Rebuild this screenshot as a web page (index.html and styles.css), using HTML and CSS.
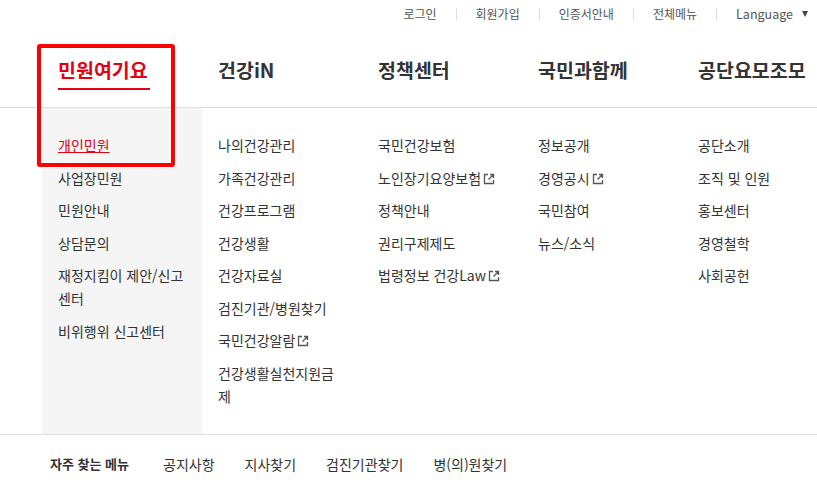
FILE: index.html
```html
<!DOCTYPE html>
<html lang="ko">
<head>
    <meta charset="UTF-8">
    <meta name="viewport" content="width=device-width, initial-scale=1.0">
    <title>국민건강보험공단 - 전체메뉴</title>
    <link rel="stylesheet" href="styles.css">
</head>

<body>
    <div class="util">
        <a href="#">로그인</a><span class="sep"></span>
        <a href="#">회원가입</a><span class="sep"></span>
        <a href="#">인증서안내</a><span class="sep"></span>
        <a href="#">전체메뉴</a><span class="sep"></span>
        <a href="#" class="lang">Language <span class="tri"></span></a>
    </div>

    <div class="gnb">
        <div class="g1 on"><span>민원여기요</span></div>
        <div class="g1"><span>건강iN</span></div>
        <div class="g1"><span>정책센터</span></div>
        <div class="g1"><span>국민과함께</span></div>
        <div class="g1"><span>공단요모조모</span></div>
    </div>

    <div class="sub">
        <ul class="col gray">
            <li><a href="#" class="cur">개인민원</a></li>
            <li><a href="#">사업장민원</a></li>
            <li><a href="#">민원안내</a></li>
            <li><a href="#">상담문의</a></li>
            <li><a href="#">재정지킴이 제안/신고센터</a></li>
            <li><a href="#">비위행위 신고센터</a></li>
        </ul>
        <ul class="col">
            <li><a href="#">나의건강관리</a></li>
            <li><a href="#">가족건강관리</a></li>
            <li><a href="#">건강프로그램</a></li>
            <li><a href="#">건강생활</a></li>
            <li><a href="#">건강자료실</a></li>
            <li><a href="#">검진기관/병원찾기</a></li>
            <li><a href="#">국민건강알람<svg class="ext" viewBox="0 0 12 12"><path d="M5 1.5H1.5v9h9V7M7 1.5h3.5V5M10.5 1.5 5.5 6.5"/></svg></a></li>
            <li><a href="#">건강생활실천지원금제</a></li>
        </ul>
        <ul class="col">
            <li><a href="#">국민건강보험</a></li>
            <li><a href="#">노인장기요양보험<svg class="ext" viewBox="0 0 12 12"><path d="M5 1.5H1.5v9h9V7M7 1.5h3.5V5M10.5 1.5 5.5 6.5"/></svg></a></li>
            <li><a href="#">정책안내</a></li>
            <li><a href="#">권리구제제도</a></li>
            <li><a href="#">법령정보 건강Law<svg class="ext" viewBox="0 0 12 12"><path d="M5 1.5H1.5v9h9V7M7 1.5h3.5V5M10.5 1.5 5.5 6.5"/></svg></a></li>
        </ul>
        <ul class="col">
            <li><a href="#">정보공개</a></li>
            <li><a href="#">경영공시<svg class="ext" viewBox="0 0 12 12"><path d="M5 1.5H1.5v9h9V7M7 1.5h3.5V5M10.5 1.5 5.5 6.5"/></svg></a></li>
            <li><a href="#">국민참여</a></li>
            <li><a href="#">뉴스/소식</a></li>
        </ul>
        <ul class="col">
            <li><a href="#">공단소개</a></li>
            <li><a href="#">조직 및 인원</a></li>
            <li><a href="#">홍보센터</a></li>
            <li><a href="#">경영철학</a></li>
            <li><a href="#">사회공헌</a></li>
        </ul>
    </div>

    <div class="quick">
        <strong>자주 찾는 메뉴</strong>
        <a href="#">공지사항</a>
        <a href="#">지사찾기</a>
        <a href="#">검진기관찾기</a>
        <a href="#">병(의)원찾기</a>
    </div>

    <!-- 강조 표시 -->
    <div class="mark"></div>
</body>
</html>
```

FILE: styles.css
```css
body {
    margin: 0;
    font-family: "Noto Sans CJK KR", "Noto Sans", sans-serif;
    color: #333;
    background: #fff;
    position: relative;
    overflow: hidden;
}
a {
    color: inherit;
    text-decoration: none;
}
ul {
    margin: 0;
    padding: 0;
    list-style: none;
}

.util {
    display: flex;
    justify-content: flex-end;
    align-items: center;
    height: 27px;
    padding-right: 9px;
    font-size: 12px;
    color: #555;
}
.util .sep {
    width: 1px;
    height: 12px;
    margin: 0 19px;
    background: #ddd;
}
.lang {
    display: flex;
    align-items: center;
    font-size: 12.5px;
}
.tri {
    width: 0;
    height: 0;
    margin-left: 9px;
    border-left: 3.5px solid transparent;
    border-right: 3.5px solid transparent;
    border-top: 6px solid #444;
}

.gnb {
    display: flex;
    height: 80px;
    padding-left: 42px;
    border-bottom: 1px solid #ddd;
}
.g1 {
    flex-shrink: 0;
    width: 160px;
    padding-left: 16px;
    box-sizing: border-box;
    padding-top: 28px;
    font-size: 19.5px;
    font-weight: bold;
    color: #333;
    white-space: nowrap;
}
.g1 span {
    display: inline-block;
    line-height: 26px;
    padding-bottom: 5px;
}
.g1.on span {
    color: #e50012;
    border-bottom: 2px solid #e50012;
    padding-right: 2px;
}

.sub {
    display: flex;
    padding-left: 42px;
    height: 326px;
    border-bottom: 1px solid #ddd;
}
.col {
    flex-shrink: 0;
    width: 160px;
    padding: 26px 18px 0 16px;
    box-sizing: border-box;
    font-size: 14px;
}
.col.gray {
    background: #f5f5f5;
}
.col li {
    line-height: 23px;
    margin-bottom: 9.5px;
}
.col a.cur {
    color: #e50012;
    text-decoration: underline;
}
.ext {
    width: 12px;
    height: 12px;
    margin-left: 2px;
    vertical-align: -1px;
    fill: none;
    stroke: #555;
    stroke-width: 1.3;
}

.quick {
    display: flex;
    align-items: center;
    gap: 30px;
    height: 57px;
    padding-left: 50px;
    font-size: 14px;
}
.quick strong {
    font-size: 13px;
    margin-right: 4px;
}

.mark {
    position: absolute;
    left: 37px;
    top: 44px;
    width: 130px;
    height: 115px;
    border: 4px solid #f00;
    border-radius: 3px;
    box-shadow: 0 0 0 1px #fff;
}
```
